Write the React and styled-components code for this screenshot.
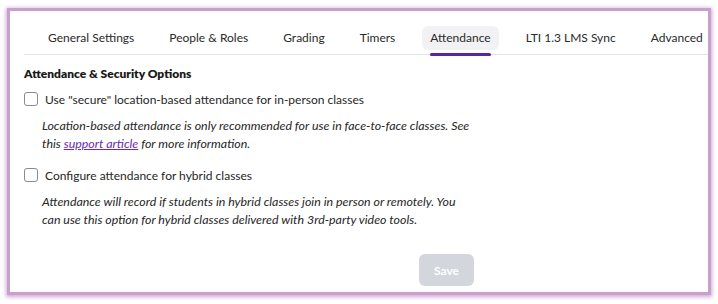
import styled, { createGlobalStyle } from 'styled-components';

const GlobalStyle = createGlobalStyle`
  body {
    margin: 0;
    background: #ffffff;
    font-family: Lato, "Noto Sans", sans-serif;
    color: #2b2b2b;
  }
`;

const tabs = [
  'General Settings',
  'People & Roles',
  'Grading',
  'Timers',
  'Attendance',
  'LTI 1.3 LMS Sync',
  'Advanced',
];

export default function App() {
  return (
    <>
      <GlobalStyle />
      <Page>
        <Card>
          <TabList>
            {tabs.map((t) => (
              <Tab key={t} $active={t === 'Attendance'}>{t}</Tab>
            ))}
          </TabList>
          <Content>
            <Heading>Attendance &amp; Security Options</Heading>
            <OptionRow>
              <Checkbox type="checkbox" />
              <span>Use "secure" location-based attendance for in-person classes</span>
            </OptionRow>
            <Help>
              Location-based attendance is only recommended for use in face-to-face classes. See
              this <a href="#">support article</a> for more information.
            </Help>
            <OptionRow $spaced>
              <Checkbox type="checkbox" />
              <span>Configure attendance for hybrid classes</span>
            </OptionRow>
            <Help>
              Attendance will record if students in hybrid classes join in person or remotely. You
              can use this option for hybrid classes delivered with 3rd-party video tools.
            </Help>
            <Actions>
              <SaveBtn disabled>Save</SaveBtn>
            </Actions>
          </Content>
        </Card>
      </Page>
    </>
  );
}

const Page = styled.div`
  padding: 11px 10px 12px 10px;
`;

const Card = styled.div`
  height: 281px;
  box-sizing: border-box;
  background: #fff;
  padding: 15px 0 0 14px;
  box-shadow: 0 0 0 3px #c9a0cb, 0 1px 4px 4px rgba(175, 110, 180, 0.6);
`;

const TabList = styled.div`
  display: flex;
  gap: 19px;
  padding-left: 16px;
  border-bottom: 1px solid #e3e3ea;
`;

const Tab = styled.div`
  position: relative;
  height: 24px;
  line-height: 24px;
  padding: 0 8px;
  margin-bottom: 4px;
  border-radius: 6px;
  font-size: 12px;
  color: #2a2a2a;
  white-space: nowrap;
  background: ${(p) => (p.$active ? '#f2f2f5' : 'transparent')};

  &::after {
    content: '';
    display: ${(p) => (p.$active ? 'block' : 'none')};
    position: absolute;
    left: 8px;
    right: 8px;
    bottom: -6px;
    height: 3px;
    border-radius: 2px;
    background: #5a23a8;
  }
`;

const Content = styled.div`
  width: 450px;
  display: flex;
  flex-direction: column;
  padding-top: 10px;
`;

const Heading = styled.div`
  font-weight: 800;
  font-size: 12px;
  line-height: 18px;
  color: #1a1a1a;
`;

const OptionRow = styled.label`
  display: flex;
  align-items: center;
  gap: 7px;
  height: 20px;
  margin-top: ${(p) => (p.$spaced ? '13px' : '6px')};
  font-size: 12px;
  color: #262626;
`;

const Checkbox = styled.input`
  appearance: none;
  margin: 0;
  width: 14px;
  height: 14px;
  border: 1px solid #868b95;
  border-radius: 3px;
  background: #fff;
  box-sizing: border-box;
`;

const Help = styled.p`
  width: 431px;
  margin: 8px 0 0 18px;
  font-size: 12.4px;
  line-height: 17.5px;
  font-style: italic;
  color: #262626;

  a {
    color: #6a2bb0;
    text-decoration: underline;
  }
`;

const Actions = styled.div`
  display: flex;
  justify-content: flex-end;
  margin-top: 26px;
`;

const SaveBtn = styled.button`
  width: 55px;
  height: 32px;
  border: none;
  border-radius: 6px;
  background: #d3d6dc;
  color: #fff;
  font-family: inherit;
  font-weight: 700;
  font-size: 12px;
`;
